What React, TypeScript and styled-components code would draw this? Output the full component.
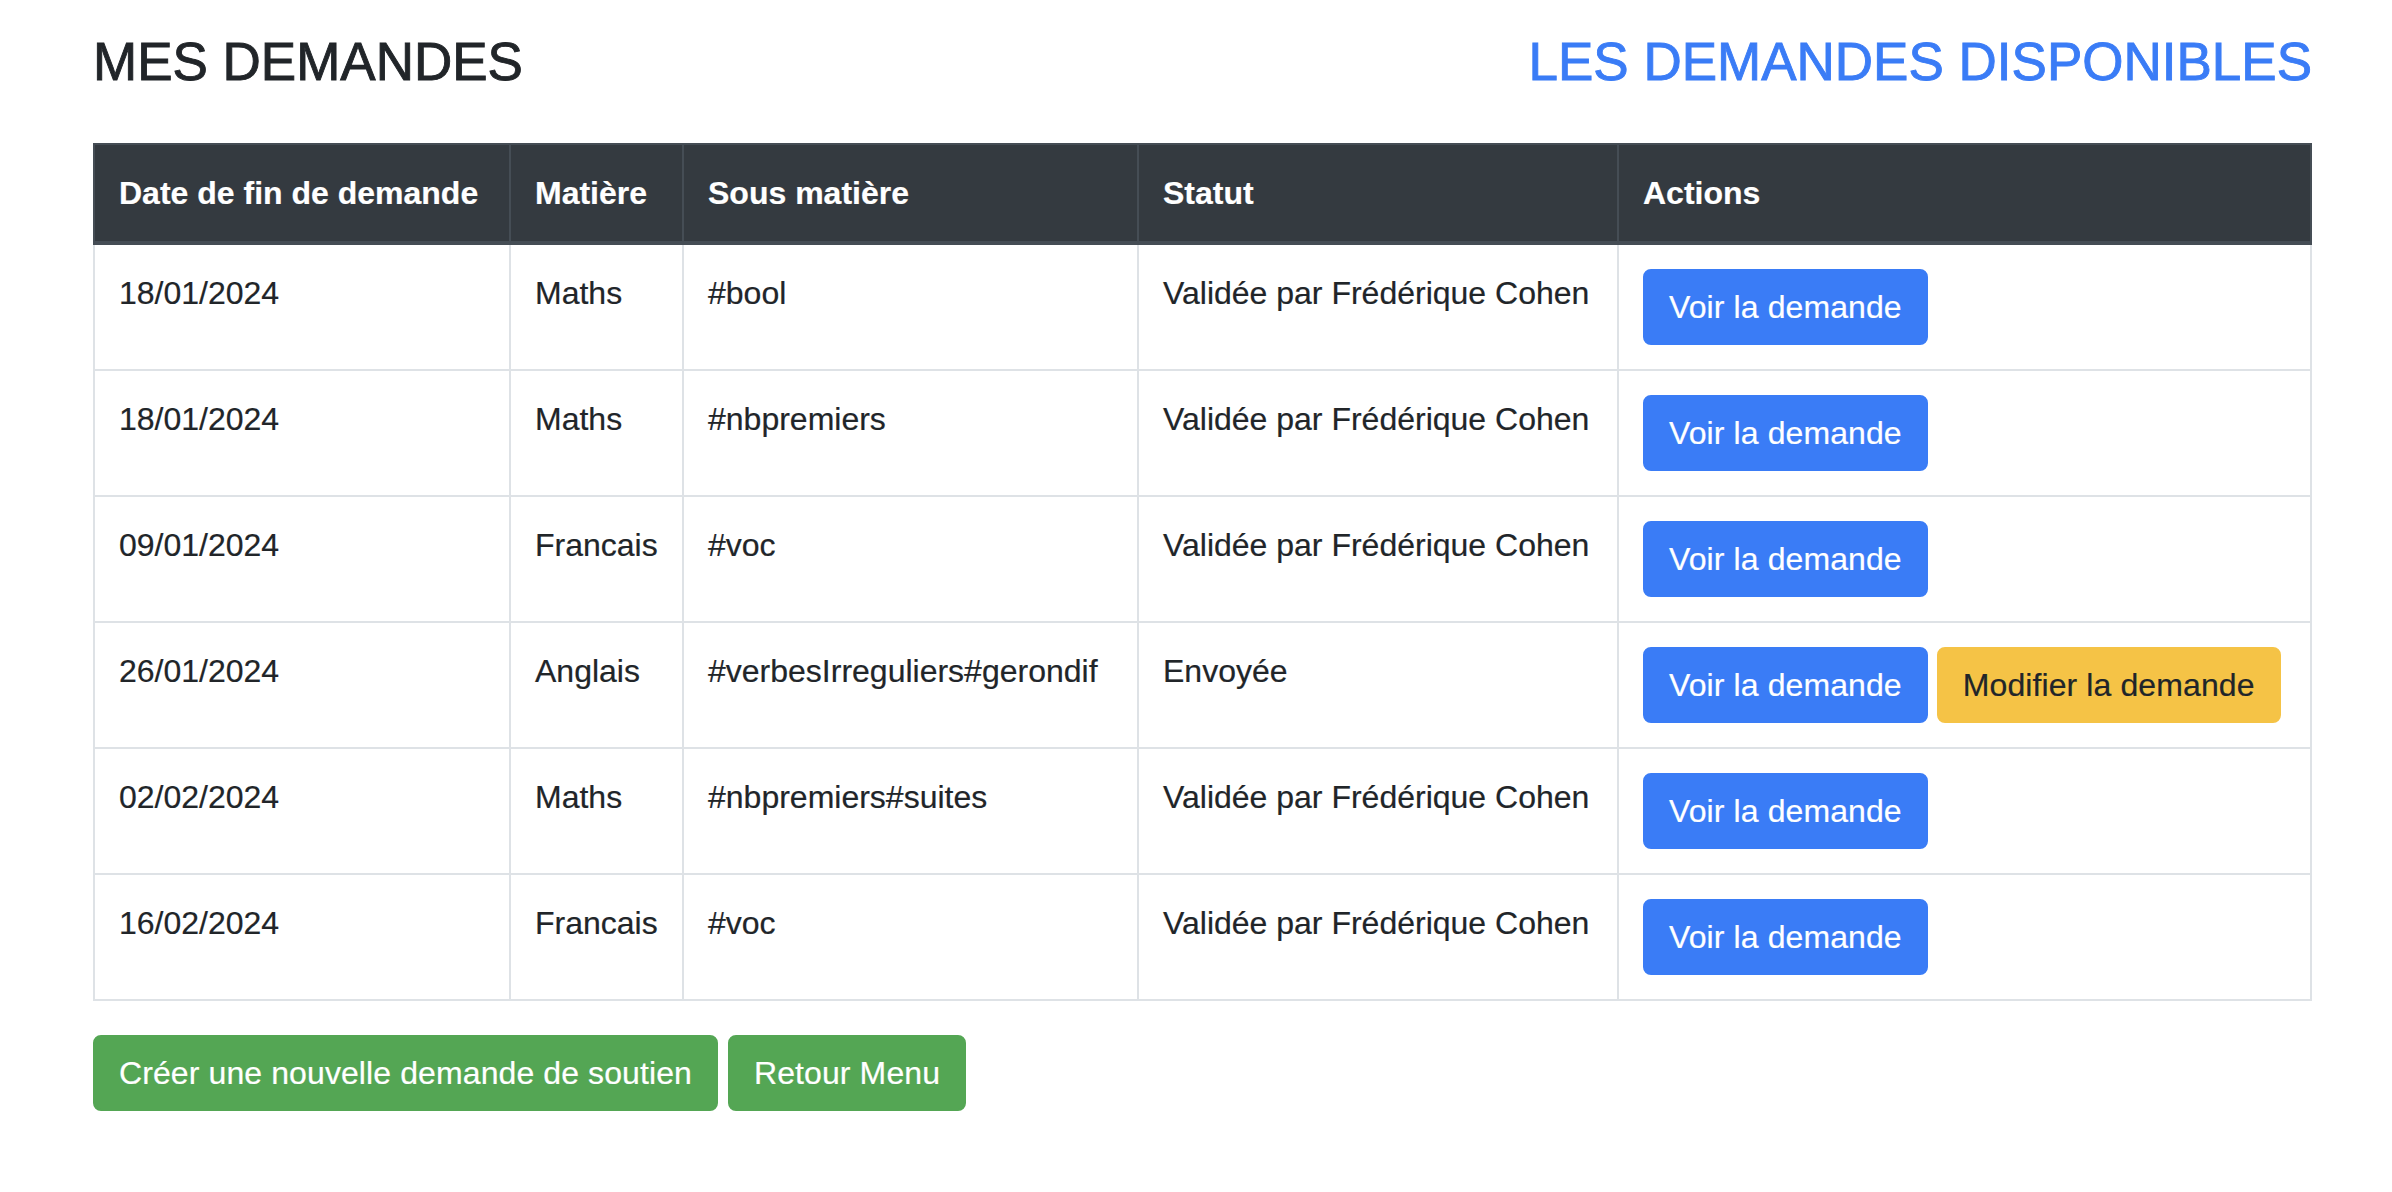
import styled, { createGlobalStyle } from "styled-components";

const GlobalStyle = createGlobalStyle`
  html, body {
    margin: 0;
    padding: 0;
    background: #fff;
  }
  body {
    font-family: "Liberation Sans", Arial, sans-serif;
    font-size: 32px;
    line-height: 48px;
    color: #212529;
    -webkit-text-stroke: 0.2px currentColor;
  }
`;

type Demande = {
  date: string;
  matiere: string;
  sous: string;
  statut: string;
  editable?: boolean;
};

const demandes: Demande[] = [
  { date: "18/01/2024", matiere: "Maths", sous: "#bool", statut: "Validée par Frédérique Cohen" },
  { date: "18/01/2024", matiere: "Maths", sous: "#nbpremiers", statut: "Validée par Frédérique Cohen" },
  { date: "09/01/2024", matiere: "Francais", sous: "#voc", statut: "Validée par Frédérique Cohen" },
  { date: "26/01/2024", matiere: "Anglais", sous: "#verbesIrreguliers#gerondif", statut: "Envoyée", editable: true },
  { date: "02/02/2024", matiere: "Maths", sous: "#nbpremiers#suites", statut: "Validée par Frédérique Cohen" },
  { date: "16/02/2024", matiere: "Francais", sous: "#voc", statut: "Validée par Frédérique Cohen" },
];

const App = () => {
  return (
    <Page>
      <GlobalStyle />
      <TitleBar>
        <Title>MES DEMANDES</Title>
        <TitleLink href="#">LES DEMANDES DISPONIBLES</TitleLink>
      </TitleBar>

      <Table>
        <thead>
          <tr>
            <Th $w={416}>Date de fin de demande</Th>
            <Th $w={173}>Matière</Th>
            <Th $w={455}>Sous matière</Th>
            <Th $w={480}>Statut</Th>
            <Th>Actions</Th>
          </tr>
        </thead>
        <tbody>
          {demandes.map((d, i) => (
            <tr key={i}>
              <Td>{d.date}</Td>
              <Td>{d.matiere}</Td>
              <Td>{d.sous}</Td>
              <Td>{d.statut}</Td>
              <Td>
                <Actions>
                  <Button $variant="primary">Voir la demande</Button>
                  {d.editable && <Button $variant="warning">Modifier la demande</Button>}
                </Actions>
              </Td>
            </tr>
          ))}
        </tbody>
      </Table>

      <Footer>
        <Button $variant="success">Créer une nouvelle demande de soutien</Button>
        <Button $variant="success">Retour Menu</Button>
      </Footer>
    </Page>
  );
};

export default App;

const Page = styled.div`
  box-sizing: border-box;
  width: 2312px;
  padding: 30px 0 40px 93px;
`;

const TitleBar = styled.div`
  display: flex;
  justify-content: space-between;
  align-items: flex-start;
  margin-bottom: 49px;
`;

const Title = styled.h1`
  margin: 0;
  font-size: 53px;
  line-height: 64px;
  font-weight: 400;
  color: #212529;
  -webkit-text-stroke: 0.9px currentColor;
`;

const TitleLink = styled.a`
  font-size: 53px;
  line-height: 64px;
  color: #3a7cf6;
  text-decoration: none;
  -webkit-text-stroke: 0.9px currentColor;
`;

const Table = styled.table`
  width: 2219px;
  border-collapse: collapse;
  margin-bottom: 34px;
  border: 2px solid #dee2e6;
`;

const Th = styled.th<{ $w?: number }>`
  width: ${(p) => (p.$w ? `${p.$w}px` : "auto")};
  box-sizing: border-box;
  padding: 24px;
  text-align: left;
  vertical-align: bottom;
  font-weight: 700;
  color: #fff;
  background: #343a40;
  border: 2px solid #454d55;
  border-bottom-width: 4px;
`;

const Td = styled.td`
  padding: 24px;
  vertical-align: top;
  border: 2px solid #dee2e6;
  white-space: nowrap;
`;

const Actions = styled.div`
  display: flex;
  gap: 9px;
`;

const variants = {
  primary: { bg: "#3a7cf6", fg: "#fff" },
  warning: { bg: "#f5c346", fg: "#212529" },
  success: { bg: "#54a654", fg: "#fff" },
};

const Button = styled.button<{ $variant: keyof typeof variants }>`
  font-family: inherit;
  font-size: 32px;
  line-height: 48px;
  letter-spacing: 0.1px;
  padding: 12px 24px;
  border: 2px solid ${(p) => variants[p.$variant].bg};
  border-radius: 8px;
  background: ${(p) => variants[p.$variant].bg};
  color: ${(p) => variants[p.$variant].fg};
  -webkit-text-stroke: 0.2px currentColor;
  cursor: pointer;
  white-space: nowrap;
`;

const Footer = styled.div`
  display: flex;
  gap: 10px;
`;
